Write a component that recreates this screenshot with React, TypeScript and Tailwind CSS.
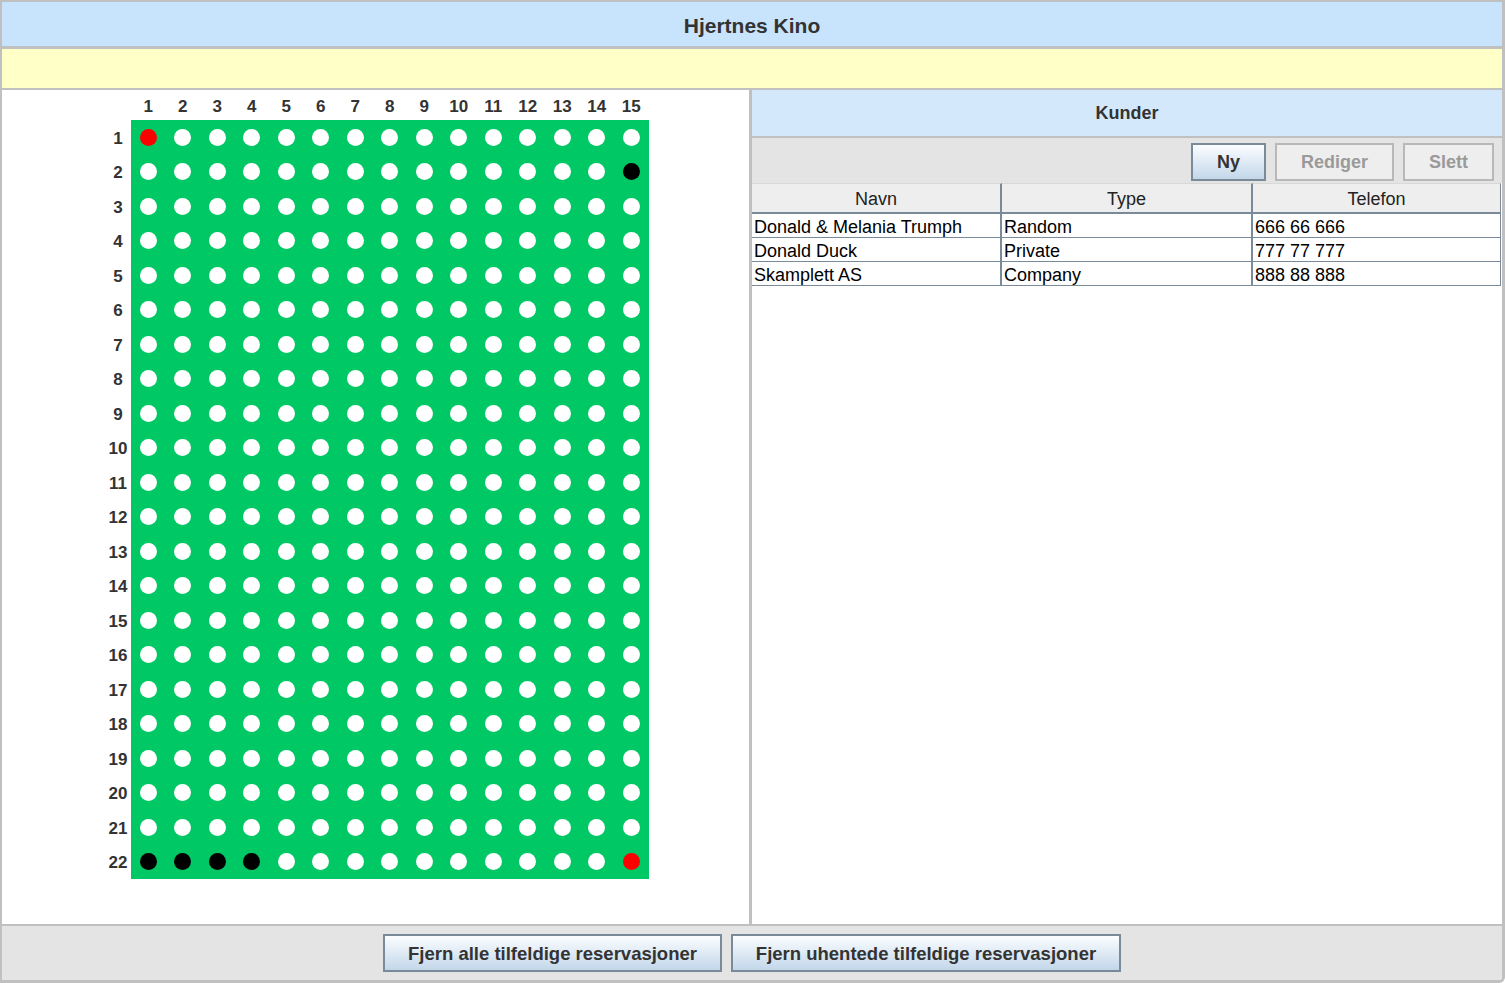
import React from "react"

const COLS = 15
const ROWS = 22

// seat states: "free" | "red" | "black"
function seatState(r: number, c: number) {
  if (r === 1 && c === 1) return "red"
  if (r === 2 && c === 15) return "black"
  if (r === 22 && c <= 4) return "black"
  if (r === 22 && c === 15) return "red"
  return "free"
}

const customers = [
  { navn: "Donald & Melania Trumph", type: "Random", telefon: "666 66 666" },
  { navn: "Donald Duck", type: "Private", telefon: "777 77 777" },
  { navn: "Skamplett AS", type: "Company", telefon: "888 88 888" },
]

function SeatMap() {
  const cols = Array.from({ length: COLS }, (_, i) => i + 1)
  const rows = Array.from({ length: ROWS }, (_, i) => i + 1)
  return (
    <div className="pl-[98px] pt-[7px]">
      <div className="flex pl-[31px] h-[23px]">
        {cols.map((c) => (
          <div key={c} className="w-[34.5px] text-center font-bold text-[17px] text-[#333333] leading-[20px]">
            {c}
          </div>
        ))}
      </div>
      <div className="flex">
        <div className="w-[31px] flex flex-col">
          {rows.map((r) => (
            <div key={r} className="h-[34.5px] flex items-center justify-center pl-[5px] pt-[2px] font-bold text-[17px] text-[#333333]">
              {r}
            </div>
          ))}
        </div>
        <div className="bg-[#00c864] flex flex-col">
          {rows.map((r) => (
            <div key={r} className="flex">
              {cols.map((c) => {
                const s = seatState(r, c)
                const color = s === "red" ? "bg-[#ff0000]" : s === "black" ? "bg-black" : "bg-white"
                return (
                  <div key={c} className="w-[34.5px] h-[34.5px] flex items-center justify-center">
                    <div className={`w-[17px] h-[17px] rounded-full ${color}`} />
                  </div>
                )
              })}
            </div>
          ))}
        </div>
      </div>
    </div>
  )
}

function ToolButton({ label, enabled }: { label: string; enabled?: boolean }) {
  return enabled ? (
    <button className="h-[38px] px-[24px] pt-[2px] border-2 border-[#7a8a99] bg-gradient-to-b from-[#fbfdff] to-[#c3d7ea] font-bold text-[18px] text-[#333333]">
      {label}
    </button>
  ) : (
    <button className="h-[38px] px-[24px] pt-[2px] border-2 border-[#b8b8b8] bg-[#eeeeee] font-bold text-[18px] text-[#9a9a9a]">
      {label}
    </button>
  )
}

export default function App() {
  return (
    <div
      className="w-[1505px] h-[983px] flex flex-col bg-white border-t-2 border-l-2 border-r-[3px] border-b-[3px] border-[#c0c0c0] rounded-br-[6px] overflow-hidden"
      style={{ fontFamily: '"Liberation Sans", Arial, sans-serif' }}
    >
      <div className="h-[47px] shrink-0 bg-[#c8e4fc] flex items-center justify-center pt-[3px] font-bold text-[21px] text-[#333333] border-b-[3px] border-[#c0c0c0]">
        Hjertnes Kino
      </div>
      <div className="h-[41px] shrink-0 bg-[#ffffc8] border-b-2 border-[#c0c0c0]" />

      <div className="flex h-[834px] shrink-0">
        <div className="w-[747px] bg-white">
          <SeatMap />
        </div>
        <div className="w-[3px] bg-[#c0c0c0]" />
        <div className="flex-1 flex flex-col bg-white">
          <div className="h-[48px] bg-[#d4e8fc] flex items-center justify-center font-bold text-[18px] text-[#333333] border-b-2 border-[#c0c0c0]">
            Kunder
          </div>
          <div className="h-[45px] bg-[#e4e4e4] flex items-center justify-end gap-[9px] pr-[8px] pt-[2px]">
            <ToolButton label="Ny" enabled />
            <ToolButton label="Rediger" />
            <ToolButton label="Slett" />
          </div>
          <div className="grid grid-cols-[250px_251px_248px] text-[18px] text-black">
            {["Navn", "Type", "Telefon"].map((h, i) => (
              <div
                key={h}
                className={`h-[31px] pt-[3px] bg-[#eeeeee] border-t border-b-2 border-[#7a8a99] border-t-[#d8d8d8] flex items-center justify-center text-[#222222] ${i < 2 ? "border-r-2" : "border-r"}`}
              >
                {h}
              </div>
            ))}
            {customers.map((c) =>
              [c.navn, c.type, c.telefon].map((v, i) => (
                <div
                  key={c.navn + i}
                  className={`h-[24px] pt-[2px] border-b border-[#7a8a99] flex items-center pl-[2px] leading-none ${i < 2 ? "border-r-2" : "border-r"}`}
                >
                  {v}
                </div>
              ))
            )}
          </div>
        </div>
      </div>

      <div className="flex-1 bg-[#e4e4e4] border-t-2 border-[#c0c0c0] flex items-center justify-center gap-[9px]">
        <button className="h-[38px] w-[339px] pt-[2px] border-2 border-[#7a8a99] bg-gradient-to-b from-[#fbfdff] to-[#c3d7ea] font-bold text-[18.5px] text-[#333333]">
          Fjern alle tilfeldige reservasjoner
        </button>
        <button className="h-[38px] w-[390px] pt-[2px] border-2 border-[#7a8a99] bg-gradient-to-b from-[#fbfdff] to-[#c3d7ea] font-bold text-[18.5px] text-[#333333]">
          Fjern uhentede tilfeldige reservasjoner
        </button>
      </div>
    </div>
  )
}
